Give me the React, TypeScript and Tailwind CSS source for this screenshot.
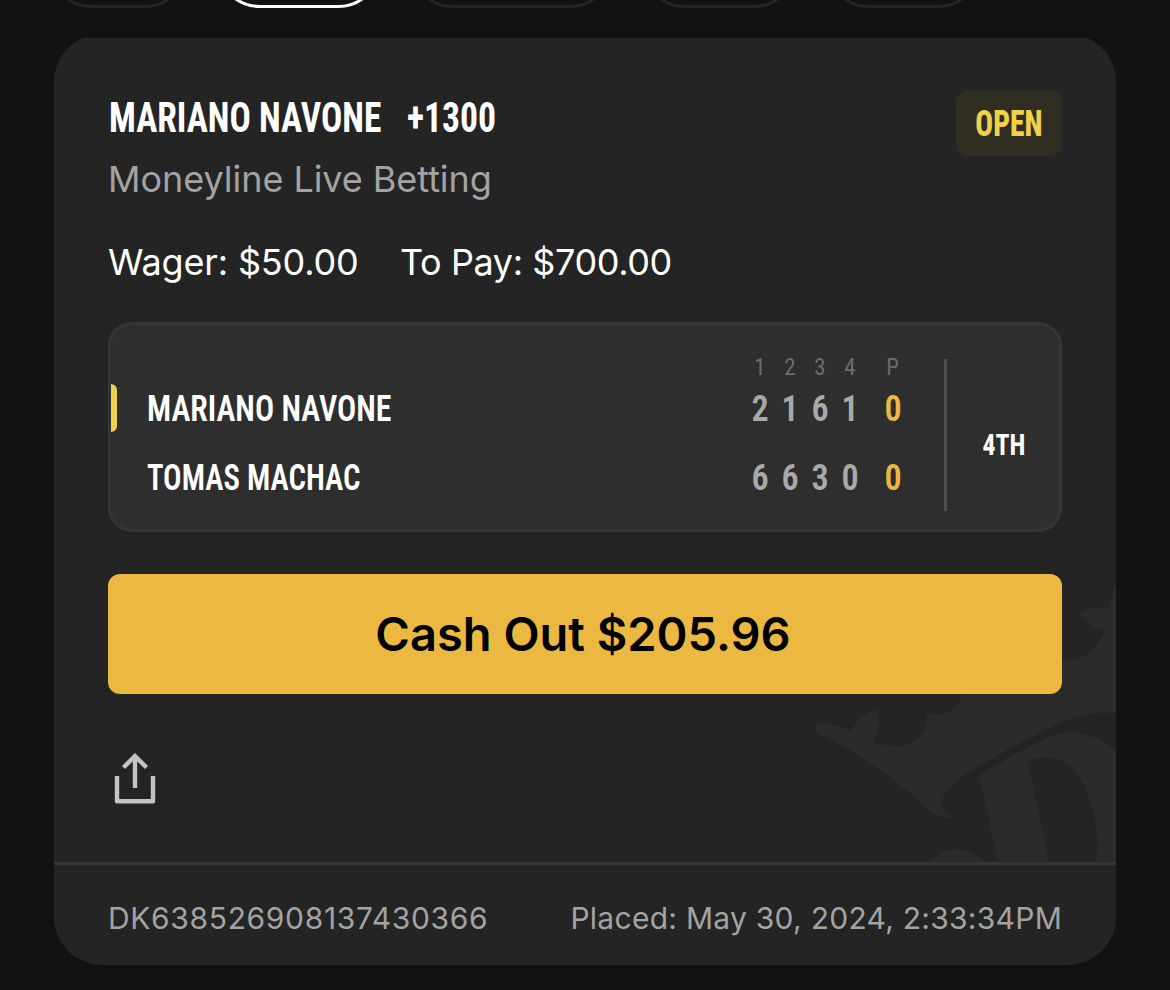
const sets = ['1', '2', '3', '4'];

const players = [
  { name: 'MARIANO NAVONE', scores: [2, 1, 6, 1], points: 0, serving: true, stretch: 'scale-x-[0.885]' },
  { name: 'TOMAS MACHAC', scores: [6, 6, 3, 0], points: 0, serving: false, stretch: 'scale-x-[0.854]' },
];

export default function App() {
  return (
    <div className="flex h-[990px] w-[1170px] flex-col overflow-hidden bg-[#121212] font-['Inter',sans-serif]">
      <FilterPills />

      <main className="mt-[30px] overflow-hidden px-[54px]">
        <article className="-mt-1 overflow-hidden rounded-[48px] bg-[#242424]">
          <section className="relative h-[828px] px-[54px] pt-14">
            <CrownMark />

            <div className="relative">
              <header className="flex items-start justify-between">
                <div className="pt-[3px]">
                  <h1 className="flex h-12 items-center pl-px text-[42px] text-white">
                    <span className="w-[298px]">
                      <Condensed className="origin-left scale-x-[0.842] font-bold">MARIANO NAVONE</Condensed>
                    </span>
                    <Condensed className="origin-left scale-x-[0.85] font-bold">+1300</Condensed>
                  </h1>
                  <p className="mt-[14px] text-[36px] leading-[48px] tracking-[-0.05px] text-[#a3a3a3]">Moneyline Live Betting</p>
                </div>
                <span className="flex h-[66px] w-[106px] items-center justify-center rounded-[12px] bg-[#302e23] pt-0.5 text-[36px] text-[#efd14b]">
                  <Condensed className="scale-x-[0.82] font-extrabold">OPEN</Condensed>
                </span>
              </header>

              <div className="mt-[35px] flex text-[36px] leading-[48px] text-white">
                <span className="w-[292px] tracking-[-0.15px]">Wager: $50.00</span>
                <span className="tracking-[-0.4px]">To Pay: $700.00</span>
              </div>

              <Scoreboard />

              <button className="mt-[42px] flex h-[120px] w-full items-center justify-center rounded-[12px] bg-[#ebb942] pr-1 text-[47px] font-semibold text-black">
                Cash Out $205.96
              </button>

              <button aria-label="Share" className="mt-[58px] ml-[6px] block">
                <ShareIcon />
              </button>
            </div>
          </section>

          <footer className="flex h-[103px] items-center justify-between border-t-[3px] border-[#353535] px-[54px] pt-1.5 text-[30px] text-[#a3a3a3]">
            <span className="tracking-[0.65px]">DK638526908137430366</span>
            <span className="tracking-[0.27px]">Placed: May 30, 2024, 2:33:34PM</span>
          </footer>
        </article>
      </main>
    </div>
  );
}

function FilterPills() {
  return (
    <nav className="flex h-2 items-end gap-[27px] pl-[48px]">
      <span className="h-[88px] w-[141px] shrink-0 rounded-full border-[3px] border-[#242424]" />
      <span className="h-[88px] w-[166px] shrink-0 rounded-full border-[3px] border-white" />
      <span className="h-[88px] w-[205px] shrink-0 rounded-full border-[3px] border-[#242424]" />
      <span className="h-[88px] w-[157px] shrink-0 rounded-full border-[3px] border-[#242424]" />
      <span className="h-[88px] w-[157px] shrink-0 rounded-full border-[3px] border-[#242424]" />
    </nav>
  );
}

function Scoreboard() {
  return (
    <div className="mt-9 flex h-[210px] rounded-[24px] border-[3px] border-[#353535] bg-[#2e2e2e]">
      <div className="flex-1 pt-[29px] pr-9">
        <div className="flex h-6 items-center justify-end pt-0.5 text-[24px] text-[#6c6c6c]">
          {sets.map((s) => (
            <Cell key={s}>{s}</Cell>
          ))}
          <Cell className="ml-[13px]">P</Cell>
        </div>

        {players.map((p) => (
          <div key={p.name} className="mt-1.5 flex h-12 items-center text-[36px] font-semibold last:mt-[21px]">
            <span className={`h-full w-[6px] rounded-r-[6px] ${p.serving ? 'bg-[#efd14b]' : ''}`} />
            <Condensed className={`mt-0.5 ml-[30px] origin-left text-white ${p.stretch}`}>{p.name}</Condensed>
            <div className="mt-0.5 ml-auto flex text-[#a9a9a9]">
              {p.scores.map((score, i) => (
                <Cell key={i}>{score}</Cell>
              ))}
              <Cell className="ml-[13px] text-[#ebb942]">{p.points}</Cell>
            </div>
          </div>
        ))}
      </div>

      <div className="mt-[34px] mb-[18px] w-[3px] bg-[#4d4d4d]" />

      <div className="flex w-[112px] items-center justify-center pt-[35px] pl-0.5 text-[30px] font-bold text-white">
        <Condensed className="scale-x-[0.86]">4TH</Condensed>
      </div>
    </div>
  );
}

function Cell({ children, className = '' }: { children: React.ReactNode; className?: string }) {
  return (
    <span className={`flex w-[30px] justify-center ${className}`}>
      <Condensed className="scale-x-[0.95]">{children}</Condensed>
    </span>
  );
}

function Condensed({ children, className = '' }: { children: React.ReactNode; className?: string }) {
  return (
    <span className={`inline-block font-['Roboto',sans-serif] whitespace-nowrap [font-stretch:75%] ${className}`}>
      {children}
    </span>
  );
}

function ShareIcon() {
  return (
    <svg width="42" height="52" viewBox="0 0 42 52" fill="none" stroke="#c4c4c4" strokeWidth="4.4">
      <path d="M3 24v25.200h36V24" strokeLinejoin="round" />
      <path d="M21 36V5M9.500 15.500 21 4 32.500 15.500" />
    </svg>
  );
}

function CrownMark() {
  return (
    <svg className="absolute right-0 bottom-0" width="300" height="302" viewBox="78 1 900 906" fill="#2b2b2b">
      <path d="M78 490Q135 488 182 516Q205 466 260 446Q275 500 250 548Q290 562 340 558Q385 550 405 505Q415 480 410 458Q440 470 470 460Q500 445 518 405L700 330L815 303Q850 308 885 287Q925 260 945 210Q895 205 867 162Q905 132 960 148Q958 105 978 78V462Q900 450 800 495Q640 570 520 650Q450 705 453 738Q460 765 502 770Q450 785 420 755Q390 725 330 675Q180 560 78 520Z" />
      <path d="M565 650Q680 575 790 525Q880 500 978 570V907H918Q930 800 895 710Q855 600 780 595Q745 594 712 602Q730 680 778 907H622Q600 780 565 650Z" />
      <path d="M415 907Q455 868 505 868Q555 872 585 907Z" />
    </svg>
  );
}
